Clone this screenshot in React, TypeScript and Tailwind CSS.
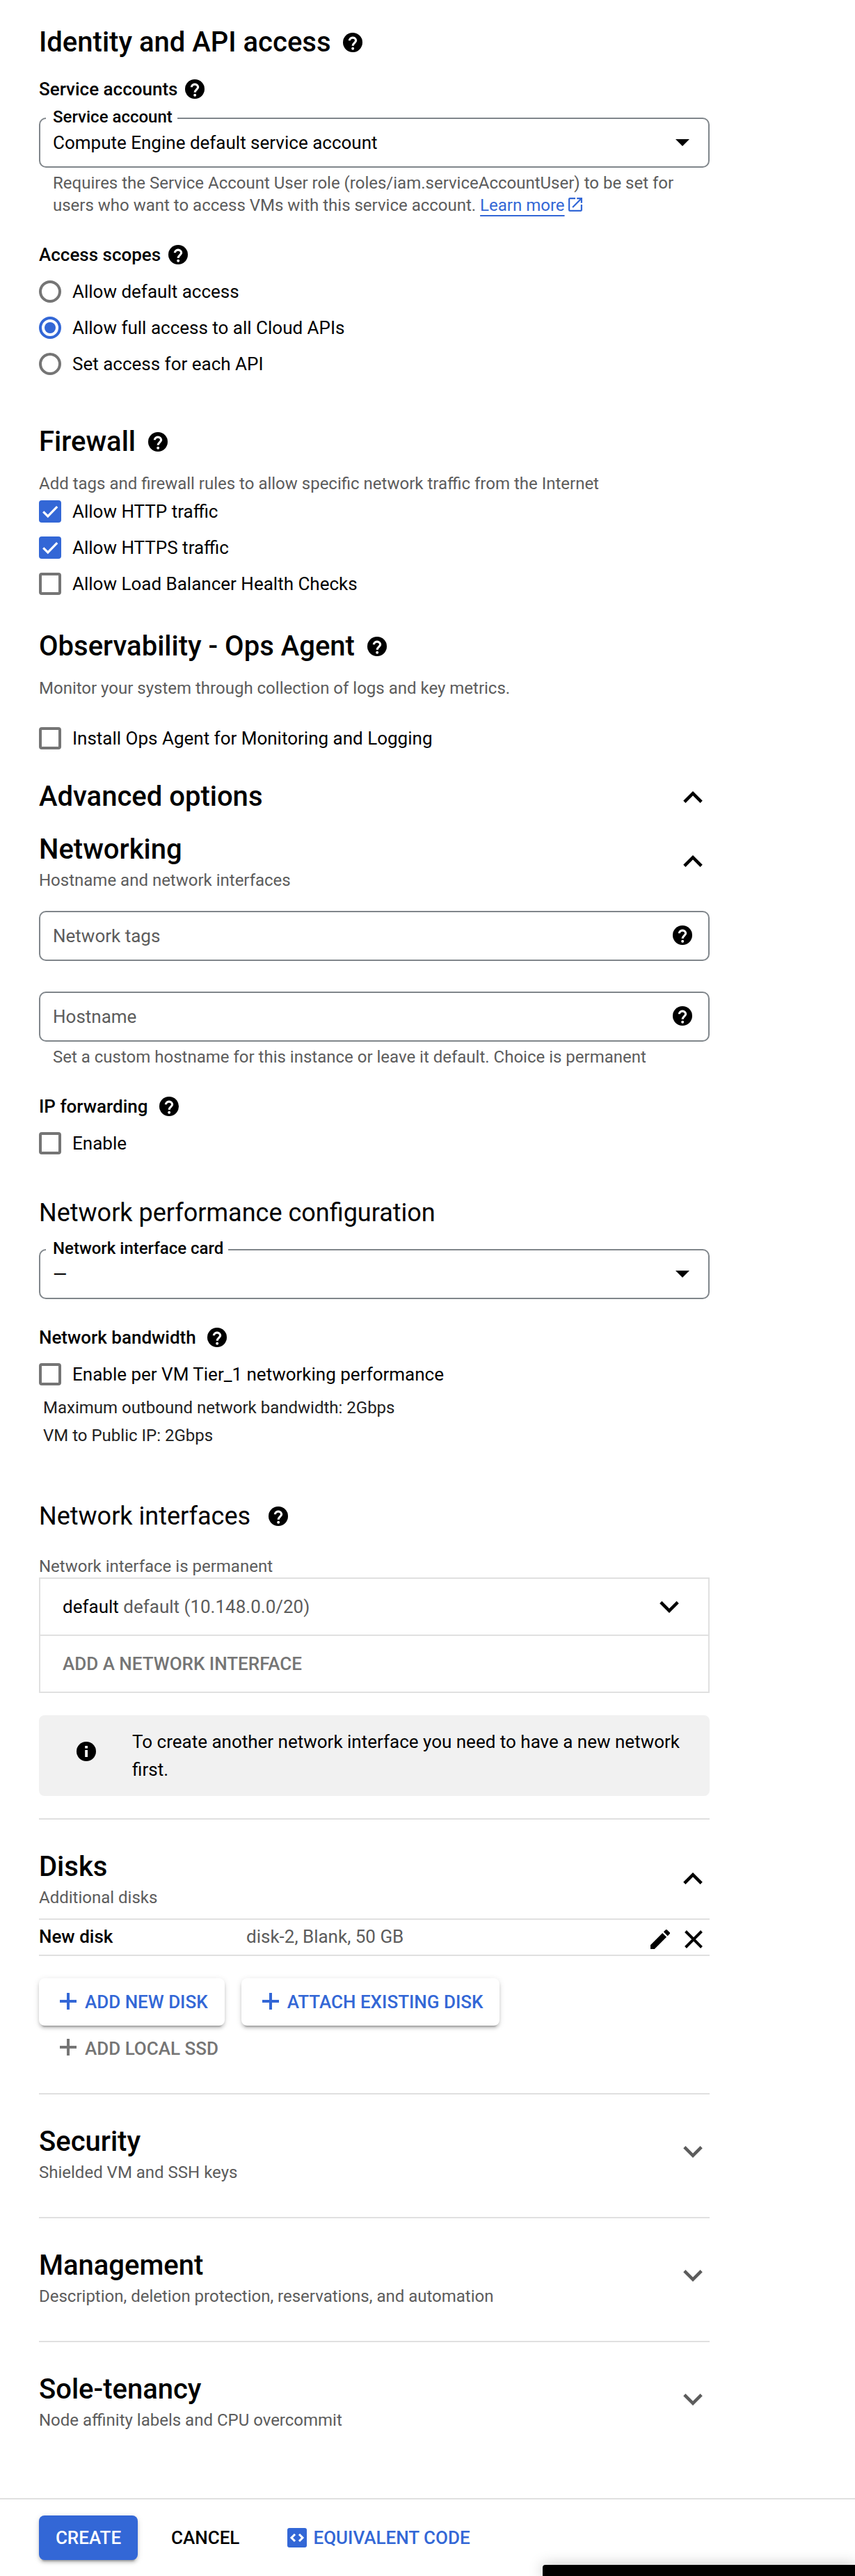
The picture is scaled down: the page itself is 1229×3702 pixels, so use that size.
import type { ReactNode } from "react";

function Help({ className = "" }: { className?: string }) {
  return (
    <svg viewBox="0 0 20 20" className={`size-7 shrink-0 ${className}`}>
      <circle cx="10" cy="10" r="10" fill="#000" />
      <path
        d="M6.7 8.1a3.3 3 0 0 1 6.6 0c0 2.2-3.2 2.6-3.2 5.3"
        fill="none"
        stroke="#fff"
        strokeWidth="2.3"
      />
      <circle cx="10.1" cy="16.2" r="1.4" fill="#fff" />
    </svg>
  );
}

function Chevron({ up = false, className = "" }: { up?: boolean; className?: string }) {
  return (
    <svg viewBox="0 0 28 17.3" className={`h-[17px] w-7 shrink-0 ${className}`} fill="none" stroke="currentColor" strokeWidth="4.6">
      <path d={up ? "M1.6 15.7 14 3.3 26.4 15.7" : "M1.6 1.6 14 14 26.4 1.6"} />
    </svg>
  );
}

function Plus() {
  return (
    <svg viewBox="0 0 24 24" className="size-6 shrink-0" fill="currentColor">
      <path d="M10 0h4v10h10v4H14v10h-4V14H0v-4h10z" />
    </svg>
  );
}

function Heading({ children, help = false, className = "" }: { children: ReactNode; help?: boolean; className?: string }) {
  return (
    <div className={`flex h-[47px] items-start gap-[18px] ${className}`}>
      <h2 className="text-[40px] leading-[47px] font-medium">{children}</h2>
      {help && <Help className="mt-[10px]" />}
    </div>
  );
}

function Label({ children, className = "" }: { children: ReactNode; className?: string }) {
  return (
    <div className={`flex h-10 items-center leading-10 font-medium ${className}`}>
      <span>{children}</span>
      <Help />
    </div>
  );
}

function Radio({ children, checked = false }: { children: ReactNode; checked?: boolean }) {
  return (
    <div className="flex h-[52px] items-center gap-4">
      <span
        className={`flex size-8 items-center justify-center rounded-full border-4 ${checked ? "border-[#3367d6]" : "border-[#757575]"}`}
      >
        {checked && <span className="size-4 rounded-full bg-[#3367d6]" />}
      </span>
      <span className="leading-10">{children}</span>
    </div>
  );
}

function Check({ children, checked = false, className = "" }: { children: ReactNode; checked?: boolean; className?: string }) {
  return (
    <div className={`flex h-[52px] items-center gap-4 ${className}`}>
      {checked ? (
        <span className="size-8 rounded bg-[#3367d6]">
          <svg viewBox="0 0 32 32" className="size-8" fill="none" stroke="#fff" strokeWidth="3.2">
            <path d="M6.2 16.3 12.8 22.9 26.2 9.2" />
          </svg>
        </span>
      ) : (
        <span className="size-8 rounded border-4 border-[#757575]" />
      )}
      <span className="leading-10">{children}</span>
    </div>
  );
}

function Select({ label, value, className = "" }: { label: string; value: string; className?: string }) {
  return (
    <div className={`relative flex h-[72px] items-center justify-between rounded-[10px] border-2 border-[#80868b] pr-[27px] pl-[18px] ${className}`}>
      <span className="absolute -top-[17px] left-2 bg-white pr-[7px] pl-[10px] text-[24px] leading-7 font-medium">{label}</span>
      <span className="leading-10">{value}</span>
      <svg viewBox="0 0 20 10" className="h-[10px] w-5">
        <path d="M0 0h20L10 10z" />
      </svg>
    </div>
  );
}

function Input({ label, className = "" }: { label: string; className?: string }) {
  return (
    <div className={`flex h-[72px] items-center justify-between rounded-[10px] border-2 border-[#80868b] pr-[23px] pl-[18px] ${className}`}>
      <span className="leading-10 text-[#5c5c5c]">{label}</span>
      <Help className="mb-[2px]" />
    </div>
  );
}

function Section({ title, sub, up = false, className = "" }: { title: string; sub: string; up?: boolean; className?: string }) {
  return (
    <div className={`flex justify-between pr-[10px] ${className}`}>
      <div>
        <Heading>{title}</Heading>
        <p className="mt-[7px] text-[24px] leading-7 text-[#5c5c5c]">{sub}</p>
      </div>
      <Chevron up={up} className={up ? "mt-8" : "mt-[30px] text-[#5c5c5c]"} />
    </div>
  );
}

const raised =
  "rounded-[8px] shadow-[0_6px_2px_-4px_rgba(0,0,0,0.2),0_4px_4px_rgba(0,0,0,0.14),0_2px_10px_rgba(0,0,0,0.12)]";

function DiskButton({ children }: { children: ReactNode }) {
  return (
    <button className={`flex h-[68px] items-center gap-3 bg-white pr-6 pl-[30px] font-medium text-[#3367d6] ${raised}`}>
      <span className="mb-[2px]">
        <Plus />
      </span>
      <span className="leading-10">{children}</span>
    </button>
  );
}

function Rule({ className = "" }: { className?: string }) {
  return <div className={`h-[2px] bg-[#e0e0e0] ${className}`} />;
}

export default function App() {
  return (
    <div className="relative h-[3702px] w-[1229px] overflow-hidden bg-white font-['Roboto',sans-serif] text-[26px] text-black">
      <main className="ml-14 flex w-[964px] flex-col pt-[37px]">
        <Heading help>Identity and API access</Heading>
        <Label className="mt-6 gap-[10.5px]">Service accounts</Label>
        <Select className="mt-[21px]" label="Service account" value="Compute Engine default service account" />
        <p className="mt-[6px] pl-5 text-[24px] leading-8 text-[#5c5c5c]">
          Requires the Service Account User role (roles/iam.serviceAccountUser) to be set for
          <br />
          users who want to access VMs with this service account.{" "}
          <a className="text-[#3367d6] underline decoration-2 underline-offset-[6px]">Learn more</a>
          <svg viewBox="3 3 18 18" className="mb-[5px] ml-[5px] inline size-5 align-middle" fill="#3367d6">
            <path d="M19 19H5V5h7V3H5a2 2 0 0 0-2 2v14a2 2 0 0 0 2 2h14c1.1 0 2-.9 2-2v-7h-2v7zM14 3v2h3.59l-9.83 9.83 1.41 1.41L19 6.41V10h2V3h-7z" />
          </svg>
        </p>
        <Label className="mt-[35px] gap-[10.5px]">Access scopes</Label>
        <div className="mt-[7px]">
          <Radio>Allow default access</Radio>
          <Radio checked>Allow full access to all Cloud APIs</Radio>
          <Radio>Set access for each API</Radio>
        </div>

        <Heading help className="mt-[62px]">Firewall</Heading>
        <p className="mt-[23px] text-[24px] leading-7 text-[#5c5c5c]">
          Add tags and firewall rules to allow specific network traffic from the Internet
        </p>
        <Check checked>Allow HTTP traffic</Check>
        <Check checked>Allow HTTPS traffic</Check>
        <Check>Allow Load Balancer Health Checks</Check>

        <Heading help className="mt-10">Observability - Ops Agent</Heading>
        <p className="mt-[23px] text-[24px] leading-7 text-[#5c5c5c]">
          Monitor your system through collection of logs and key metrics.
        </p>
        <Check className="mt-8">Install Ops Agent for Monitoring and Logging</Check>

        <div className="mt-[34px] flex items-start justify-between pr-[10px]">
          <Heading>Advanced options</Heading>
          <Chevron up className="mt-4" />
        </div>
        <Section className="mt-[29px]" up title="Networking" sub="Hostname and network interfaces" />
        <Input className="mt-[30px]" label="Network tags" />
        <Input className="mt-11" label="Hostname" />
        <p className="mt-[6px] pl-5 text-[24px] leading-8 text-[#5c5c5c]">
          Set a custom hostname for this instance or leave it default. Choice is permanent
        </p>
        <Label className="mt-[35px] gap-4">IP forwarding</Label>
        <Check className="mt-[7px]">Enable</Check>

        <h3 className="mt-[53px] text-[36px] leading-[42px]">Network performance configuration</h3>
        <Select className="mt-[31px]" label="Network interface card" value="—" />
        <Label className="mt-[35px] gap-4">Network bandwidth</Label>
        <Check className="mt-[7px]">Enable per VM Tier_1 networking performance</Check>
        <div className="mt-[2px] pl-[6px] text-[24px] leading-10 text-[#212121]">
          <p>Maximum outbound network bandwidth: 2Gbps</p>
          <p>VM to Public IP: 2Gbps</p>
        </div>

        <div className="mt-[75px] flex h-[42px] items-start gap-[26px]">
          <h3 className="text-[36px] leading-[42px]">Network interfaces</h3>
          <Help className="mt-[7px]" />
        </div>
        <p className="mt-[37px] text-[24px] leading-7 text-[#5c5c5c]">Network interface is permanent</p>
        <div className="mt-[2px] border-2 border-[#e0e0e0]">
          <div className="flex h-20 items-center justify-between pr-[42px] pl-8">
            <span className="leading-10 whitespace-pre">
              default <span className="text-[#5c5c5c]">default (10.148.0.0/20)</span>
            </span>
            <Chevron />
          </div>
          <div className="flex h-[82px] items-center border-t-2 border-[#e0e0e0] pl-8 leading-10 font-medium text-[#757575]">
            ADD A NETWORK INTERFACE
          </div>
        </div>
        <div className="mt-8 flex h-[116px] rounded-[8px] bg-[#f1f1f1] pt-[18px] pl-[54px]">
          <svg viewBox="0 0 28 28" className="mt-5 size-7 shrink-0">
            <circle cx="14" cy="14" r="14" />
            <path d="M12.2 6h3.8v3.6h-3.8zM12.2 12h3.8v10h-3.8z" fill="#fff" />
          </svg>
          <p className="ml-[52px] leading-10">
            To create another network interface you need to have a new network
            <br />
            first.
          </p>
        </div>
        <Rule className="mt-8" />

        <Section className="mt-11" up title="Disks" sub="Additional disks" />
        <div className="mt-4 flex h-[54px] items-start border-y-2 border-[#e0e0e0] pr-[10px]">
          <span className="mt-1 w-[298px] leading-10 font-medium">New disk</span>
          <span className="mt-1 flex-1 leading-10 text-[#5c5c5c]">disk-2, Blank, 50 GB</span>
          <svg viewBox="3 3 18 18" className="mt-[14px] size-7">
            <path d="M3 17.25V21h3.75L17.81 9.94l-3.75-3.75L3 17.25zM20.71 7.04a.996.996 0 0 0 0-1.41l-2.34-2.34a.996.996 0 0 0-1.41 0l-1.83 1.83 3.75 3.75 1.83-1.83z" />
          </svg>
          <svg viewBox="0 0 26 26" className="mt-[15px] ml-[21px] size-[26px]" stroke="#000" strokeWidth="4">
            <path d="M1.5 1.5l23 23M24.5 1.5l-23 23" />
          </svg>
        </div>
        <div className="mt-8 flex gap-6">
          <DiskButton>ADD NEW DISK</DiskButton>
          <DiskButton>ATTACH EXISTING DISK</DiskButton>
        </div>
        <div className="mt-[13px] flex h-10 items-center gap-3 pl-[30px] leading-10 font-medium text-[#757575]">
          <span className="mb-1">
            <Plus />
          </span>
          ADD LOCAL SSD
        </div>
        <Rule className="mt-11" />
        <Section className="mt-11" title="Security" sub="Shielded VM and SSH keys" />
        <Rule className="mt-[50px]" />
        <Section className="mt-11" title="Management" sub="Description, deletion protection, reservations, and automation" />
        <Rule className="mt-[50px]" />
        <Section className="mt-11" title="Sole-tenancy" sub="Node affinity labels and CPU overcommit" />
      </main>

      <footer className="mt-[98px] flex h-28 items-start border-t-2 border-[#e0e0e0] pt-[23px] pl-14 leading-10 font-medium">
        <button className={`h-16 w-[142px] bg-[#3367d6] text-white ${raised}`}>CREATE</button>
        <button className="ml-6 h-16 w-[146px] pl-6 text-left">CANCEL</button>
        <button className="ml-[45px] flex h-16 items-center gap-[9.5px] text-[#3367d6]">
          <svg viewBox="0 0 28 28" className="size-7">
            <rect width="28" height="28" rx="3" fill="#3367d6" />
            <path d="M11 9 6 14l5 5M17 9l5 5-5 5" fill="none" stroke="#fff" strokeWidth="3" />
          </svg>
          EQUIVALENT CODE
        </button>
      </footer>
      <div className="absolute right-0 bottom-0 h-4 w-[449px] rounded-tl-[4px] bg-black shadow-[0_0_20px_rgba(0,0,0,0.25)]" />
    </div>
  );
}
